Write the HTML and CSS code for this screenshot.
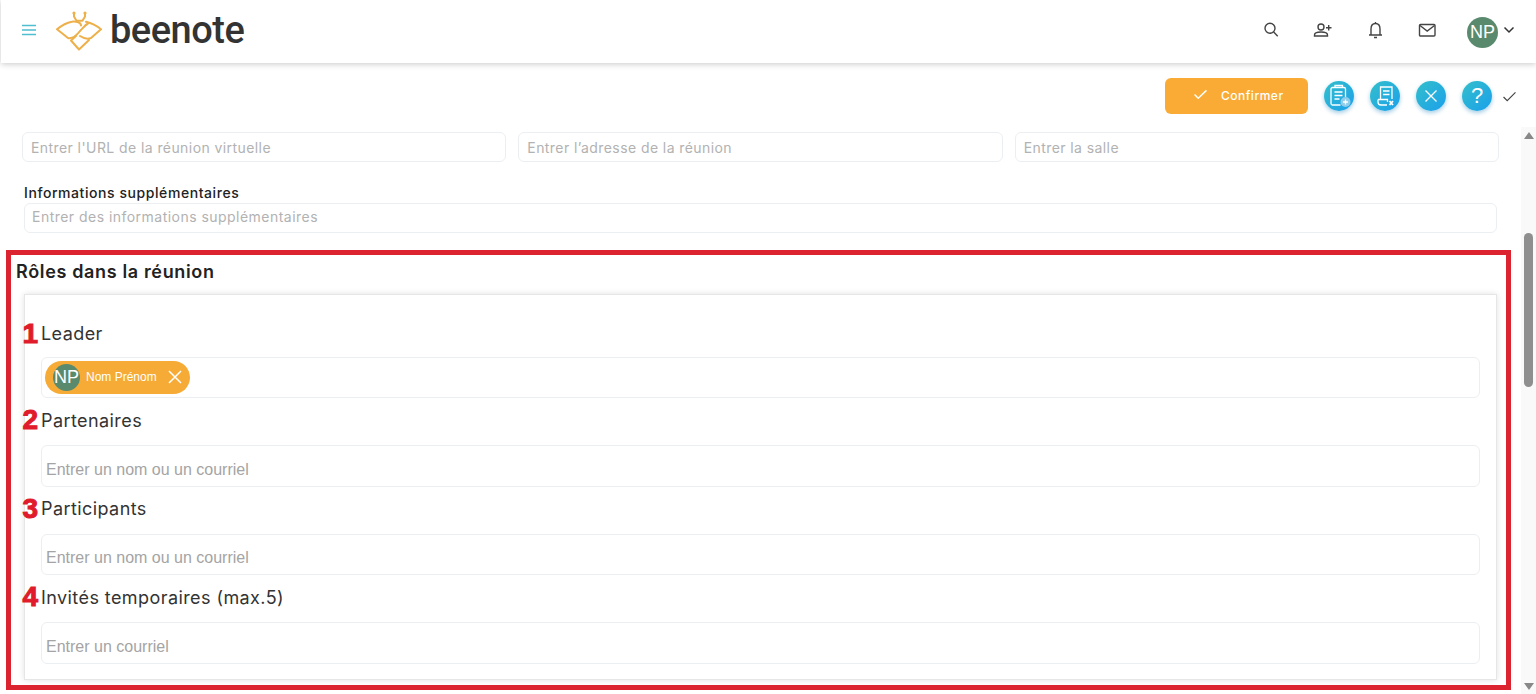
FILE: index.html
```html
<!DOCTYPE html>
<html lang="fr">
<head>
<meta charset="utf-8">
<title>beenote</title>
<link rel="stylesheet" href="styles.css">
</head>
<body>
<header class="topbar">
  <div class="brand">
    <svg class="burger" viewBox="0 0 16 12" width="16" height="12"><path d="M1 1.500h14M1 6h14M1 10.500h14"/></svg>
    <svg class="bee" viewBox="0 0 46 40" width="46" height="40">
      <path d="M18 3v2.500L20.500 9.700h6L29 5.500V3"/>
      <path d="M25 14.500C25 11 19 10 15.700 10.700C11 11.500 5 15 1 18.300L12 27C17 28 21 24 24 20C27 17 29 14 32 12.500"/>
      <path d="M30 10.800C35 12 41 15 45 18.300L35 27C31 28.500 27 27 24 25"/>
      <path d="M20 25L15 29.500L23 38.500L33 29"/>
      <circle class="dot" cx="18" cy="2" r="1.600"/>
      <circle class="dot" cx="29" cy="2" r="1.600"/>
    </svg>
    <span class="wordmark">beenote</span>
  </div>
  <nav class="top-actions">
    <svg class="ticon" viewBox="0 0 24 24"><circle cx="11" cy="10.300" r="5"/><path d="M14.700 14L18.700 18.300"/></svg>
    <svg class="ticon" viewBox="0 0 24 24"><circle cx="10" cy="9" r="3"/><path d="M3.500 18v-1c0-2 3-3 6.500-3s6.500 1 6.500 3v1zM15 9.700h5.500M17.700 7v5.400"/></svg>
    <svg class="ticon" viewBox="0 0 24 24"><path d="M12.500 4v1.500M8 17v-6c0-3.500 2-5.500 4.500-5.500S17 7.500 17 11v6zM6 17h13M11 19.500h3"/></svg>
    <svg class="ticon" viewBox="0 0 24 24"><rect x="4.500" y="6.500" width="15.500" height="11.500" rx="1"/><path d="M5 7.500l7.200 5.500 7.300-5.500"/></svg>
    <div class="user">
      <span class="avatar">NP</span>
      <svg class="chev" viewBox="0 0 12 8" width="12" height="8"><path d="M1.500 1.500L6 6l4.500-4.500"/></svg>
    </div>
  </nav>
</header>

<div class="toolbar">
  <button class="confirm" type="button">
    <svg viewBox="0 0 16 12" width="15" height="11"><path d="M1.500 6l4 4L14.500 1.500"/></svg>
    <span>Confirmer</span>
  </button>
  <span class="round">
    <svg viewBox="0 0 30 30" width="30" height="30"><path d="M16.500 24H8.500A1.500 1.500 0 0 1 7 22.500V8a1.500 1.500 0 0 1 1.500-1.500H20A1.500 1.500 0 0 1 21.500 8V16M11 6.500V4.500h7.500V6.500M10.500 11h8M10.500 14.500h8M10.500 18h5"/><circle class="badge" cx="21.500" cy="21" r="5"/><path class="badge-plus" d="M21.500 18.500v5M19 21h5"/></svg>
  </span>
  <span class="round">
    <svg viewBox="0 0 30 30" width="30" height="30"><path d="M10.500 18V6H22V18M13 10h6.500M13 13.500h6.500M8 18.500h9.500V21M8 18.500V21a3 3 0 0 0 3 3h6"/><path class="thick" d="M19.500 20l3.500 4M23 20l-3.500 4"/></svg>
  </span>
  <span class="round">
    <svg viewBox="0 0 30 30" width="30" height="30"><path d="M9.500 9.500l11 11M20.500 9.500l-11 11"/></svg>
  </span>
  <span class="round question">?</span>
  <svg class="tick" viewBox="0 0 16 12" width="15" height="11"><path d="M1.500 6.500l4 4L14.500 1.500"/></svg>
</div>

<div class="body-row">
  <main class="main">
    <div class="url-row">
      <input class="field-top" placeholder="Entrer l'URL de la réunion virtuelle">
      <input class="field-top" placeholder="Entrer l’adresse de la réunion">
      <input class="field-top" placeholder="Entrer la salle">
    </div>
    <div class="info">
      <label class="info-label">Informations supplémentaires</label>
      <input class="field-top field-info" placeholder="Entrer des informations supplémentaires">
    </div>
    <section class="roles">
      <h2 class="roles-title">Rôles dans la réunion</h2>
      <div class="card">
        <div class="role">
          <div class="role-label"><b class="num">1</b>Leader</div>
          <div class="box">
            <span class="chip">
              <span class="chip-avatar">NP</span>
              <span class="chip-name">Nom Prénom</span>
              <svg viewBox="0 0 14 14" width="14" height="14"><path d="M1 1l12 12M13 1L1 13"/></svg>
            </span>
          </div>
        </div>
        <div class="role">
          <div class="role-label"><b class="num">2</b>Partenaires</div>
          <input class="box box-input" placeholder="Entrer un nom ou un courriel">
        </div>
        <div class="role">
          <div class="role-label"><b class="num">3</b>Participants</div>
          <input class="box box-input" placeholder="Entrer un nom ou un courriel">
        </div>
        <div class="role">
          <div class="role-label"><b class="num">4</b>Invités temporaires (max.5)</div>
          <input class="box box-input" placeholder="Entrer un courriel">
        </div>
      </div>
    </section>
  </main>
  <aside class="scrollbar">
    <i class="arrow-up"></i>
    <i class="thumb"></i>
    <i class="arrow-down"></i>
  </aside>
</div>
</body>
</html>
```
FILE: styles.css
```css
* { box-sizing: border-box; }
html, body { margin: 0; height: 694px; overflow: hidden; }
body {
  display: flex;
  flex-direction: column;
  background: #fff;
  font-family: Inter, "Liberation Sans", sans-serif;
  color: #222;
}
svg { fill: none; stroke: currentColor; display: block; flex: none; }

.topbar {
  height: 63px;
  margin-left: 1px;
  flex: none;
  display: flex;
  align-items: center;
  justify-content: space-between;
  padding: 0 21px 4px 20px;
  background: #fff;
  box-shadow: 0 1px 6px rgba(0,0,0,.22);
  position: relative;
}
.brand { display: flex; align-items: center; }
.burger { color: #4fbfcf; stroke-width: 1.4; margin-right: 19px; }
.bee { color: #edb04a; stroke-width: 2; stroke-linejoin: round; stroke-linecap: round; margin-top: 3px; }
.bee .dot { fill: #edb04a; stroke: none; }
.wordmark {
  margin-left: 8px;
  margin-top: 1px;
  font-family: Roboto, sans-serif;
  font-weight: 500;
  font-size: 38px;
  line-height: 40px;
  letter-spacing: -.5px;
  color: #333;
}
.top-actions { display: flex; align-items: center; gap: 28px; }
.ticon { width: 24px; height: 24px; color: #444; stroke-width: 1.4; }
.user { display: flex; align-items: center; gap: 5px; }
.avatar {
  width: 31px; height: 31px; border-radius: 50%;
  margin-top: 5px;
  background: #5a8a6e; color: #fff;
  font: 18px/31px "Liberation Sans", sans-serif;
  text-align: center;
}
.chev { color: #333; stroke-width: 1.5; }

.toolbar {
  height: 64px;
  flex: none;
  display: flex;
  align-items: center;
  justify-content: flex-end;
  padding: 2px 19px 0 0;
}
.confirm {
  width: 143px; height: 36px;
  margin-right: 16px;
  border: 0; border-radius: 6px;
  background: #f9ab35;
  color: #fff;
  display: flex; align-items: center;
  padding: 0 0 2px 28px;
  font: 500 12px Inter, sans-serif;
  letter-spacing: .5px;
}
.confirm svg { stroke-width: 1.6; margin-right: 13px; margin-top: -2px; }
.round {
  width: 30px; height: 30px; border-radius: 50%;
  background: linear-gradient(135deg, #33bfca, #1ba0ec);
  box-shadow: 0 2px 4px rgba(30,130,190,.4);
  color: #fff;
  margin-right: 16px;
  flex: none;
}
.round svg { stroke-width: 1.3; }
.round .thick { stroke-width: 1.8; }
.round .badge { fill: #8fcdeb; stroke: none; }
.round .badge-plus { stroke: #fff; }
.question {
  margin-right: 10px;
  font: 22px/29px "Liberation Sans", sans-serif;
  text-align: center;
}
.tick { color: #444; stroke-width: 1.3; margin-top: 1px; }

.body-row { flex: 1; min-height: 0; display: flex; }
.main { flex: 1; min-width: 0; padding-top: 5px; overflow: hidden; }
input { outline: none; background: #fff; display: block; }

.field-top {
  width: 100%;
  height: 30px;
  border: 1px solid #eceff1;
  border-radius: 6px;
  padding: 0 8px;
  font: 14px Inter, sans-serif;
  letter-spacing: .42px;
}
.field-top::placeholder { color: #b2b2b2; opacity: 1; }
.field-info { padding: 0 7px 3px; letter-spacing: .47px; }

.url-row {
  margin: 0 22px;
  display: grid;
  grid-template-columns: repeat(3, 1fr);
  gap: 12px;
}
.info { margin: 23px 24px 17px; }
.info-label {
  display: block;
  font: 500 14px/16px Inter, sans-serif;
  letter-spacing: .57px;
  color: #222;
  margin-bottom: 2px;
}
.roles {
  margin: 0 10px 0 6px;
  height: 440px;
  border: 5px solid #dc2430;
  padding: 6px 9px 5px 5px;
  display: flex;
  flex-direction: column;
}
.roles-title {
  margin: 0 0 11px;
  font: 600 18px/22px Inter, sans-serif;
  letter-spacing: .65px;
  color: #222;
}
.card {
  flex: 1;
  margin-left: 8px;
  border: 1px solid #e6e6e6;
  box-shadow: 0 0 6px rgba(0,0,0,.12);
  padding: 26.500px 16px 0;
}
.role { margin-bottom: 10px; }
.role-label {
  display: flex;
  align-items: center;
  height: 24px;
  margin: 0 0 13px -24px;
  font-size: 18px;
  letter-spacing: .42px;
  color: #333;
}
.role:first-child .role-label { margin-bottom: 11px; }
.num {
  width: 24px;
  padding-right: 3px;
  text-align: right;
  font: 700 28px/24px "Liberation Sans", sans-serif;
  color: #e01b2b;
  -webkit-text-stroke: 1px #e01b2b;
  letter-spacing: 0;
}
.box {
  width: 100%;
  height: 41.500px;
  border: 1px solid #eceff1;
  border-radius: 6px;
  display: flex;
  align-items: center;
  padding: 0 3px;
}
.box-input { font: 16px "Liberation Sans", sans-serif; padding: 8px 4px 0; }
.box-input::placeholder { color: #a4a4a4; opacity: 1; }
.chip {
  width: 145px; height: 33px;
  border-radius: 17px;
  background: #f5ab35;
  color: #fff;
  display: flex; align-items: center;
  padding-left: 8px;
}
.chip-avatar {
  width: 27px; height: 27px; border-radius: 50%;
  background: #5a8a6e;
  font: 18px/27px "Liberation Sans", sans-serif;
  text-align: center;
  flex: none;
}
.chip-name { font: 12px "Liberation Sans", sans-serif; margin: 0 11px 0 6px; white-space: nowrap; }
.chip svg { stroke-width: 1.5; }

.scrollbar {
  width: 15px;
  flex: none;
  background: #f9f9f9;
  display: flex;
  flex-direction: column;
  align-items: center;
  padding-top: 5px;
}
.arrow-up, .arrow-down {
  width: 0; height: 0;
  border-left: 5.500px solid transparent;
  border-right: 5.500px solid transparent;
}
.arrow-up { border-bottom: 7px solid #888; }
.arrow-down { border-top: 7px solid #888; margin-top: 296px; }
.thumb {
  width: 9px; height: 154px;
  border-radius: 5px;
  background: #8f8f8f;
  margin-top: 94px;
}
```
